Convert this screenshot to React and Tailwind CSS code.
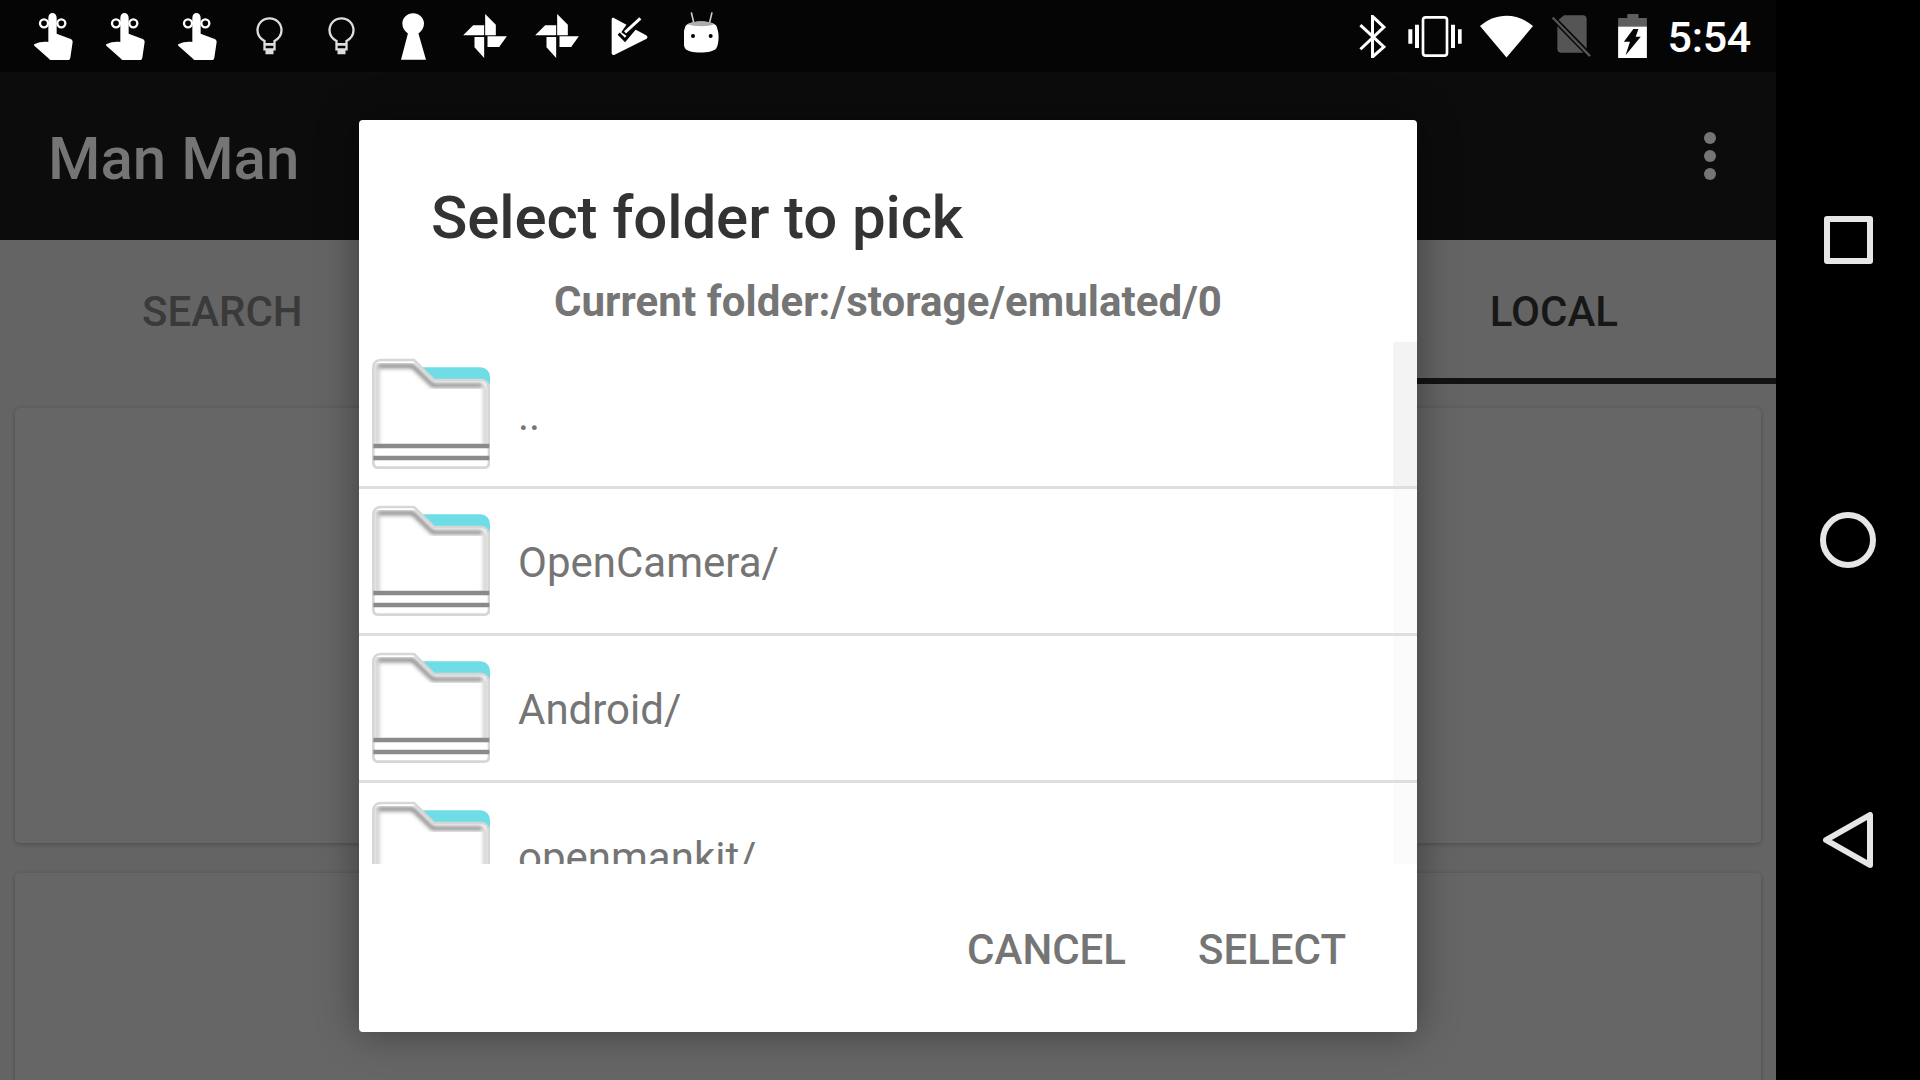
const Slot = ({ children, className = "" }) => (
  <div className={`w-[72px] shrink-0 flex justify-center ${className}`}>{children}</div>
);

const Finger = () => (
  <svg width="39" height="47" viewBox="40 14 117 141">
    <path fill="#fff" d="M83 28c0-9 6-14 12-14s13 5 13 14v48l42 16c4 2 6 5 6 9l-7 47c-1 5-3 7-8 7H92c-3 0-5-1-7-4L41 112c-2-2-2-4 2-5 12-6 26-8 40-6z" />
    <circle cx="70" cy="45" r="12" fill="none" stroke="#fff" strokeWidth="7" />
    <circle cx="122" cy="45" r="12" fill="none" stroke="#fff" strokeWidth="7" />
  </svg>
);

const Bulb = () => (
  <svg width="27" height="38" viewBox="50 28 80 114">
    <path fill="none" stroke="#ddd" strokeWidth="7" d="M75 100C60 92 54 80 54 68c0-21 16-36 36-36s36 15 36 36c0 12-6 24-21 32v25H75z" />
    <path fill="#ddd" d="M75 106h30v8H75zM78 126h24v14H78z" />
  </svg>
);

const Keyhole = () => (
  <svg width="25" height="47" viewBox="484 14 76 141">
    <path fill="#fff" d="M521 14c18 0 33 14 33 31 0 13-7 23-17 30l23 80h-76l21-80c-10-7-17-17-17-30 0-17 15-31 33-31z" />
  </svg>
);

const Pinwheel = () => (
  <svg width="44" height="44" viewBox="42 18 131 132">
    <path fill="#fff" d="M108 18l32 32v32h-32zM42 82l30-30h33v30zM115 85h58l-23 32h-35zM76 87h29v63l-29-32z" />
  </svg>
);

const Ticket = () => (
  <svg width="37" height="38" viewBox="488 26 111 114">
    <path fill="#fff" d="M490 34c0-5 4-7 8-4l94 50c7 4 7 9 0 13l-93 46c-5 2-9 0-9-5z" />
    <path fill="none" stroke="#050505" strokeWidth="22" d="M528 78l30-44" />
    <path fill="none" stroke="#fff" strokeWidth="9" d="M530 72l46-42" />
    <path fill="none" stroke="#050505" strokeWidth="9" d="M511 76l19 19 32-38" />
  </svg>
);

const Robot = () => (
  <svg width="35" height="41" viewBox="703 14 105 121">
    <path stroke="#ccc" strokeWidth="5" d="M725 14l7 30M787 14l-7 30" />
    <path fill="#fff" d="M706 60c0-25 96-25 96 0 8 20 5 50-2 62-10 17-86 17-94 0-6-12-8-42 0-62z" />
    <path fill="#adadad" d="M714 50c18-12 64-12 80 0-16 8-62 8-80 0z" />
    <circle cx="730" cy="85" r="6" fill="#050505" />
    <circle cx="783" cy="85" r="6" fill="#050505" />
  </svg>
);

const Folder = () => (
  <svg width="118" height="112" viewBox="64 56 354 336" className="shrink-0">
    <defs>
      <filter id="soft" x="-15%" y="-15%" width="130%" height="130%">
        <feGaussianBlur stdDeviation="7" />
      </filter>
      <filter id="softer" x="-5%" y="-50%" width="110%" height="200%">
        <feGaussianBlur stdDeviation="2" />
      </filter>
    </defs>
    <path fill="#6fdde6" d="M215 84h175c18 2 28 14 28 30v26l-15-18H250z" />
    <path d="M76 398h340" stroke="#aaa" strokeWidth="6" filter="url(#soft)" />
    <path d="M80 80h106l60 58h150" fill="none" stroke="#666" strokeWidth="10" filter="url(#soft)" />
    <path d="M80 80v240M404 140v180" fill="none" stroke="#bbb" strokeWidth="10" filter="url(#soft)" />
    <path
      d="M90 62h100l60 60h145c12 2 20 14 20 28v220c0 10-5 15-15 15H85c-12 0-17-5-17-15V85c0-14 8-23 22-23z"
      fill="none"
      stroke="#d6d6d6"
      strokeWidth="8"
    />
    <path d="M68 320h348M68 356h348" stroke="#8a8a8a" strokeWidth="14" filter="url(#softer)" />
  </svg>
);

const FolderRow = ({ name, divider = true, track = "bg-[#fbfbfb]" }) => (
  <div className={`relative h-[147px] shrink-0 flex items-center pl-[13px] ${divider ? "border-b-[3px] border-[#dedede]" : ""}`}>
    <Folder />
    <span className="ml-[28px] mt-[2px] text-[#757575] text-[42px]">{name}</span>
    <div className={`absolute right-0 top-0 bottom-0 w-[24px] ${track}`} />
  </div>
);

export default function App() {
  return (
    <div className="relative w-[1920px] h-[1080px] overflow-hidden flex bg-black font-['Roboto',sans-serif]">
      <div className="w-[1776px] flex flex-col">
        <div className="h-[72px] shrink-0 bg-[#050505] flex items-center pl-[17px] pr-[25px]">
          <div className="flex items-center">
            <Slot><Finger /></Slot>
            <Slot><Finger /></Slot>
            <Slot><Finger /></Slot>
            <Slot><Bulb /></Slot>
            <Slot><Bulb /></Slot>
            <Slot><Keyhole /></Slot>
            <Slot><Pinwheel /></Slot>
            <Slot><Pinwheel /></Slot>
            <Slot><Ticket /></Slot>
            <Slot className="-mt-[8px]"><Robot /></Slot>
          </div>
          <div className="ml-auto flex items-center text-white">
            <svg width="27" height="43" viewBox="30 20 80 128" fill="none" stroke="#fff" strokeWidth="9">
              <path d="M34 50l70 65-34 30V24l34 32-70 66" />
            </svg>
            <svg width="54" height="41" viewBox="178 22 160 123" fill="none" className="ml-[22px]">
              <rect x="222" y="26" width="72" height="115" rx="8" stroke="#fff" strokeWidth="8" />
              <path fill="#fff" d="M178 62h12v43h-12zM198 48h12v70h-12zM306 48h12v70h-12zM327 62h11v43h-11z" />
            </svg>
            <svg width="53" height="43" viewBox="392 18 160 127" className="ml-[18px]">
              <path fill="#fff" d="M392 50C440 8 504 8 552 50l-80 95z" />
            </svg>
            <svg width="39" height="42" viewBox="608 25 117 125" className="ml-[19px]">
              <path fill="#555" d="M624 42l20-17h56c8 0 12 4 12 12v101H636c-8 0-12-4-12-12z" />
              <path stroke="#050505" strokeWidth="16" d="M608 30l117 120" />
              <path stroke="#555" strokeWidth="7" d="M610 32l112 116" />
            </svg>
            <svg width="29" height="44" viewBox="808 18 85 130" className="ml-[27px]">
              <path fill="#5e5e5e" d="M835 18h33v12h25v25H808V30h27z" />
              <path fill="#fff" d="M808 55h85v93h-85z" />
              <path fill="#050505" d="M853 62h15l-8 23h15l-45 55 13-40h-18z" />
            </svg>
            <span className="ml-[21px] mt-[3px] text-[43px] leading-none font-medium tracking-[-0.3px] text-white">5:54</span>
          </div>
        </div>
        <div className="h-[168px] shrink-0 bg-[#0c0c0c] flex items-center justify-between pl-[48px] pr-[60px]">
          <span className="text-[60px] font-medium text-[#757575] leading-none mt-[5px]">Man Man</span>
          <div className="flex flex-col gap-[6px]">
            <span className="w-[12px] h-[12px] rounded-full bg-[#757575]" />
            <span className="w-[12px] h-[12px] rounded-full bg-[#757575]" />
            <span className="w-[12px] h-[12px] rounded-full bg-[#757575]" />
          </div>
        </div>
        <div className="flex-1 bg-[#646464] flex flex-col">
          <div className="h-[144px] shrink-0 flex text-[42px] font-medium leading-none">
            <div className="flex-1 flex items-center justify-start pl-[142px] text-[#3a3a3a]">SEARCH</div>
            <div className="flex-1 flex items-center justify-end pr-[158px] pt-[6px] text-[#171717] border-b-[6px] border-[#131313]">LOCAL</div>
          </div>
          <div className="px-[15px] pt-[24px] flex flex-col gap-[30px]">
            <div className="h-[435px] rounded-[5px] bg-[#666666] shadow-[0_1px_4px_rgba(0,0,0,0.25)]" />
            <div className="h-[300px] rounded-[5px] bg-[#666666] shadow-[0_1px_4px_rgba(0,0,0,0.25)]" />
          </div>
        </div>
      </div>
      <div className="w-[144px] bg-black flex flex-col pt-[90px]">
        <div className="h-[300px] flex items-center justify-center">
          <div className="w-[49px] h-[48px] border-[6px] border-[#e6e6e6] rounded-[3px]" />
        </div>
        <div className="h-[300px] flex items-center justify-center">
          <div className="w-[56px] h-[56px] border-[6px] border-[#e6e6e6] rounded-full" />
        </div>
        <div className="h-[300px] flex items-center justify-center">
          <svg width="50" height="56" viewBox="0 0 50 56" fill="none" stroke="#e6e6e6" strokeWidth="6" strokeLinejoin="round">
            <path d="M47 3v50L3 28z" />
          </svg>
        </div>
      </div>

      <div className="absolute left-[359px] top-[120px] w-[1058px] h-[912px] bg-white rounded-[4px] shadow-[0_0_40px_rgba(0,0,0,0.4)] flex flex-col">
        <div className="pl-[72px] pt-[56px] h-[156px] shrink-0 text-[60px] leading-[84px] tracking-[-0.12px] font-medium text-[#333]">Select folder to pick</div>
        <div className="h-[66px] shrink-0 flex items-start justify-center text-[42px] leading-[52px] tracking-[0.06px] font-bold text-[#757575]">Current folder:/storage/emulated/0</div>
        <div className="h-[522px] shrink-0 overflow-hidden flex flex-col">
          <FolderRow name=".." track="bg-[#f3f3f3]" />
          <FolderRow name="OpenCamera/" />
          <FolderRow name="Android/" />
          <FolderRow name="openmankit/" divider={false} />
        </div>
        <div className="flex-1 flex items-center justify-end gap-[72px] pr-[71px] pt-[2px] text-[42px] font-medium text-[#757575]">
          <span>CANCEL</span>
          <span>SELECT</span>
        </div>
      </div>
    </div>
  );
}
